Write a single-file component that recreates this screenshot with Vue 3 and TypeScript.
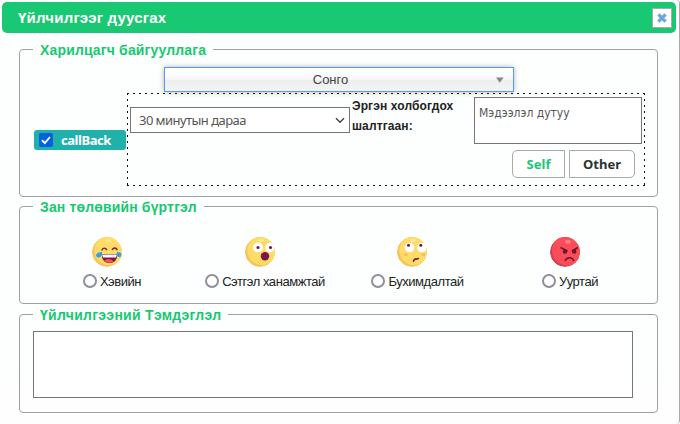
<script setup lang="ts">
import { ref } from 'vue'

type Mood = { id: string; label: string }

const moods: Mood[] = [
  { id: 'laugh', label: 'Хэвийн' },
  { id: 'shock', label: 'Сэтгэл ханамжтай' },
  { id: 'upset', label: 'Бухимдалтай' },
  { id: 'angry', label: 'Ууртай' },
]
const callBack = ref(true)
const mood = ref('')
const reason = ref('Мэдээлэл дутуу')
const note = ref('')
</script>

<template>
  <main class="dialog">
    <header class="titlebar">
      <h1>Үйлчилгээг дуусгах</h1>
      <button class="close" aria-label="Хаах">
        <svg width="10" height="10" viewBox="0 0 10 10">
          <path d="M1.4 1.4L8.6 8.6M8.6 1.4L1.4 8.6" stroke="#6ea8d8" stroke-width="3.4" />
        </svg>
      </button>
    </header>

    <fieldset class="org">
      <legend>Харилцагч байгууллага</legend>
      <div class="chosen">
        <span>Сонго</span>
        <svg width="8" height="6" viewBox="0 0 8 6"><path d="M0 0.5H7.6L3.8 5.8Z" fill="#888" /></svg>
      </div>
      <div class="callrow">
        <label class="callback">
          <input v-model="callBack" type="checkbox" />
          <svg class="check" width="14" height="14" viewBox="0 0 14 14">
            <rect width="14" height="14" rx="2" fill="#0060df" />
            <path d="M3 7.3L5.8 10L11 4" fill="none" stroke="#fff" stroke-width="1.9" />
          </svg>
          <span>callBack</span>
        </label>
        <div class="panel">
          <div class="delay">
            <span>30 минутын дараа</span>
            <svg width="10" height="7" viewBox="0 0 10 7"><path d="M1 1.2L5 5.2L9 1.2" fill="none" stroke="#444" stroke-width="1.4" /></svg>
          </div>
          <div class="why">Эргэн холбогдох<br />шалтгаан:</div>
          <div class="side">
            <textarea v-model="reason" class="reason" spellcheck="false"></textarea>
            <div class="buttons">
              <button class="self">Self</button>
              <button class="other">Other</button>
            </div>
          </div>
        </div>
      </div>
    </fieldset>

    <fieldset class="moods">
      <legend>Зан төлөвийн бүртгэл</legend>
      <div class="grid">
        <label v-for="m in moods" :key="m.id" class="mood">
          <svg class="face" width="30" height="30" viewBox="0 0 30 30">
            <template v-if="m.id === 'angry'">
              <circle cx="15" cy="15" r="15" fill="#ca4350" />
              <circle cx="17" cy="13.5" r="15" fill="#fc4c59" />
              <ellipse cx="18" cy="4.7" rx="3" ry="2" fill="#ff7b80" />
              <path d="M10.5 10.5L17.5 14M28 10.5L22 14" stroke="#6b1730" stroke-width="1.5" />
              <circle cx="15" cy="14.5" r="2.2" fill="#6b1730" />
              <circle cx="24.2" cy="14.5" r="2.2" fill="#6b1730" />
              <path d="M15 24Q16.3 20.8 19.5 20.8T24 24" fill="none" stroke="#6b1730" stroke-width="1.5" />
            </template>
            <template v-else>
              <circle cx="15" cy="15" r="15" fill="#f8c45a" />
              <circle cx="17" cy="13.5" r="14.5" fill="#ffdc67" />
              <ellipse cx="16" cy="3.6" rx="3" ry="1.7" fill="#ffe892" />
            </template>
            <template v-if="m.id === 'laugh'">
              <path d="M9.5 13.5Q12 9 15 13M20 13Q22.5 9 25.5 13" fill="none" stroke="#702047" stroke-width="1.4" />
              <path d="M9.5 17H25.5Q25 26 17.5 26T9.5 17Z" fill="#7c1843" />
              <path d="M10 17.5H25L24 20.5H11Z" fill="#fff" />
              <path d="M12 24Q15 20.5 20 23L21.5 25Q17 27 12 24Z" fill="#fa5056" />
              <path d="M10 15Q4 15 4 19Q7 23 10 18ZM25 15Q30 15 29.5 19Q27 22 24.5 18Z" fill="#359ee6" />
            </template>
            <template v-else-if="m.id === 'shock'">
              <circle cx="13" cy="10.5" r="5" fill="#fff" />
              <circle cx="25" cy="10.5" r="4.7" fill="#fff" />
              <circle cx="13" cy="10.5" r="1.6" fill="#7b1746" />
              <circle cx="25.5" cy="10.5" r="1.6" fill="#7b1746" />
              <circle cx="20" cy="19.2" r="4.2" fill="#7b1746" />
            </template>
            <template v-else-if="m.id === 'upset'">
              <circle cx="12.5" cy="10.5" r="4.8" fill="#fff" />
              <circle cx="24.8" cy="10.5" r="4.8" fill="#fff" />
              <circle cx="11.5" cy="8.3" r="1.5" fill="#7b1746" />
              <circle cx="23.8" cy="8.3" r="1.5" fill="#7b1746" />
              <ellipse cx="9" cy="17.6" rx="2" ry="1.2" fill="#ffad70" />
              <ellipse cx="26.5" cy="17.6" rx="2" ry="1.2" fill="#ffad70" />
              <path d="M16.5 24Q17.5 21.5 19.5 22L21.3 21.5" fill="none" stroke="#7b1746" stroke-width="1.7" stroke-linecap="round" />
            </template>
          </svg>
          <span class="choice">
            <input v-model="mood" type="radio" name="mood" :value="m.id" />
            <span class="name">{{ m.label }}</span>
          </span>
        </label>
      </div>
    </fieldset>

    <fieldset class="notes">
      <legend>Үйлчилгээний Тэмдэглэл</legend>
      <textarea v-model="note" class="note"></textarea>
    </fieldset>
  </main>
</template>

<style>
body {
  margin: 0;
  background: #fcfffe;
  overflow: hidden;
}
</style>

<style scoped>
* {
  box-sizing: border-box;
}
.dialog {
  width: 680px;
  height: 424px;
  padding: 2px 21px 0 19px;
  border-right: 1px solid #aaa;
  border-radius: 0 4px 4px 0;
  background: linear-gradient(#fcfffe 86%, #fefefe 94%);
  font-family: "Liberation Sans", sans-serif;
  color: #222;
}
.titlebar {
  display: flex;
  align-items: center;
  justify-content: space-between;
  width: 674px;
  height: 31px;
  margin: 0 -17px;
  padding: 0 4px 0 16px;
  border-radius: 5px;
  background: #19c872;
}
h1 {
  margin: 0;
  font: bold 15px/18px "Liberation Sans", sans-serif;
  letter-spacing: 0.2px;
  color: #fff;
}
.close {
  display: flex;
  align-items: center;
  justify-content: center;
  width: 20px;
  height: 20px;
  padding: 0;
  border: 1px solid #aaa;
  background: #fff;
}
fieldset {
  width: 639px;
  margin: 0;
  padding: 0;
  border: 1px solid #a0a0a0;
  border-radius: 4px;
}
legend {
  margin-left: 13px;
  padding: 0 7px;
  height: 17px;
  font: bold 14px/19px "Liberation Sans", sans-serif;
  letter-spacing: 0.15px;
  white-space: nowrap;
  color: #19c872;
}
.org {
  height: 156px;
  margin-top: 8px;
}
.chosen {
  display: flex;
  align-items: center;
  width: 350px;
  height: 25px;
  margin: 9px 0 0 144px;
  padding-right: 9px;
  border: 1px solid #5897fb;
  background: linear-gradient(#fff 20%, #f6f6f6 50%, #eee 52%, #f4f4f4);
  box-shadow: 0 0 5px rgba(0, 0, 0, 0.3);
  font: 13px/23px "Liberation Sans", sans-serif;
  color: #444;
}
.chosen span {
  flex: 1;
  text-align: center;
}
.callrow {
  display: flex;
  margin: 1px 0 0 14px;
}
.callback {
  display: flex;
  align-items: center;
  width: 92px;
  height: 20px;
  margin: 37px 1px 0 0;
  padding-left: 5px;
  border-radius: 3px;
  background: #20b2aa;
  font: bold 13px/18px "Noto Sans", sans-serif;
  letter-spacing: -0.45px;
  color: #fff;
}
.callback input {
  display: none;
}
.check {
  margin-top: -1px;
}
.callback span {
  margin: -1px 0 0 8px;
}
.panel {
  display: flex;
  align-items: flex-start;
  width: 518px;
  height: 93px;
  padding: 4px 3px;
  background:
    repeating-linear-gradient(90deg, #111 0 2px, transparent 2px 6px) 0 0 / 100% 1px no-repeat,
    repeating-linear-gradient(90deg, #111 0 2px, transparent 2px 6px) 0 100% / 100% 1px no-repeat,
    repeating-linear-gradient(#111 0 2px, transparent 2px 6px) 0 0 / 1px 100% no-repeat,
    repeating-linear-gradient(#111 0 2px, transparent 2px 6px) 100% 0 / 1px 100% no-repeat;
}
.delay {
  display: flex;
  align-items: center;
  justify-content: space-between;
  width: 220px;
  height: 26px;
  margin-top: 10px;
  padding: 0 4px 0 8px;
  border: 1px solid #767676;
  background: #fff;
  font: 13px/24px "Noto Sans", sans-serif;
  letter-spacing: -0.55px;
  color: #555;
}
.why {
  width: 124px;
  padding-left: 2px;
  margin-top: -1px;
  font: bold 12px/20px "Liberation Sans", sans-serif;
  letter-spacing: 0.12px;
  white-space: nowrap;
}
.side {
  width: 168px;
}
textarea {
  display: block;
  margin: 0;
  border: 1px solid #767676;
  border-radius: 0;
  background: #fff;
  resize: none;
  outline: none;
}
.reason {
  width: 168px;
  height: 47px;
  padding: 7px 4px;
  font: 12px/16px "DejaVu Sans Condensed", sans-serif;
  color: #555;
}
.buttons {
  display: flex;
  gap: 4px;
  margin: 6px 0 0 38px;
}
.buttons button {
  height: 28px;
  padding: 0;
  border: 1px solid #aaa;
  background: #fff;
  font: bold 13px/26px "Noto Sans", sans-serif;
}
.buttons .self {
  width: 53px;
  border-radius: 5px 0 0 5px;
  color: #19c872;
}
.buttons .other {
  width: 66px;
  border-radius: 0 5px 5px 0;
  color: #2b3333;
}
.moods {
  height: 106px;
  margin-top: 1px;
}
.grid {
  display: grid;
  grid-template-columns: 153px 153px 152px 153px;
  padding: 22px 0 0 10px;
}
.mood {
  display: flex;
  flex-direction: column;
  align-items: center;
}
.face {
  display: block;
  border-radius: 50%;
}
.choice {
  display: flex;
  align-items: center;
  height: 16px;
  margin-top: 6px;
  padding-left: 11px;
}
.choice input {
  appearance: none;
  width: 14px;
  height: 14px;
  margin: 0 3px 0 0;
  border: 2px solid #8f8f9d;
  border-radius: 50%;
  background: #fff;
}
.name {
  font: 13px/18px "Liberation Sans", sans-serif;
  letter-spacing: -0.45px;
  white-space: nowrap;
  padding-top: 1px;
}
.notes {
  height: 107px;
  margin-top: 2px;
}
.notes legend {
  letter-spacing: 0.28px;
}
.note {
  width: 600px;
  height: 67px;
  margin: 8px 0 0 13px;
}
</style>
